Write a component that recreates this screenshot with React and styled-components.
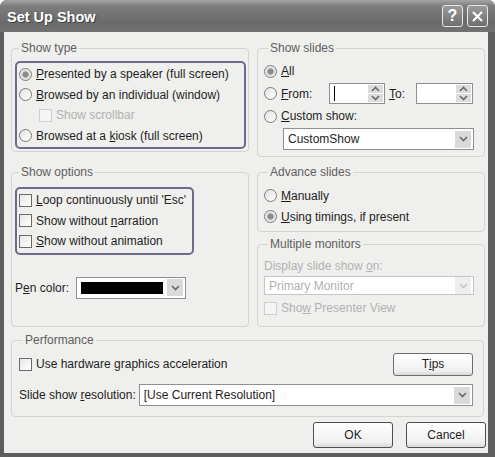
import React from 'react'
import styled, { createGlobalStyle } from 'styled-components'

const GlobalStyle = createGlobalStyle`
  html, body { margin: 0; padding: 0; background: #ffffff; }
  body { font-family: "Liberation Sans", Arial, sans-serif; }
`;

const Window = styled.div`
  width: 495px;
  height: 457px;
  background: #5e5e5e;
  border-radius: 7px 7px 0 0;
  display: flex;
  flex-direction: column;
  overflow: hidden;
`;

const TitleBar = styled.div`
  height: 32px;
  flex: none;
  display: flex;
  align-items: center;
  padding: 0 7px 0 7px;
  background: linear-gradient(#a4a4a4 0%, #7c7c7c 20%, #6a6a6a 70%, #727272 100%);
`;

const TitleText = styled.div`
  flex: 1;
  color: #ffffff;
  font-weight: bold;
  font-size: 14.5px;
  text-shadow: 1px 1px 0 #3e3e3e;
  padding-top: 2px;
`;

const CaptionButton = styled.div`
  width: 21px;
  height: 22px;
  box-sizing: border-box;
  margin-left: 4px;
  border: 1px solid #e8e8e8;
  border-radius: 3px;
  background: linear-gradient(#9a9a9a, #6e6e6e);
  display: flex;
  align-items: center;
  justify-content: center;
  color: #ffffff;
  font-weight: bold;
  font-size: 16px;
`;

const Client = styled.div`
  flex: 1;
  margin: 0 7px 4px 4px;
  background: #efefed;
  padding: 9px 4px 0 7px;
  display: flex;
  flex-direction: column;
  color: #1e1e1e;
  font-size: 12px;
`;

const Columns = styled.div`
  display: grid;
  grid-template-columns: 238px 228px;
  column-gap: 8px;
`;

const Column = styled.div`
  display: flex;
  flex-direction: column;
  min-width: 0;
  gap: ${p => p.$gap || 8}px;
`;

const Group = styled.fieldset`
  margin: 0;
  min-width: 0;
  box-sizing: border-box;
  height: ${p => p.$h}px;
  border: 1px solid #d3d3cf;
  border-radius: 4px;
  padding: ${p => p.$pad || '2px 2px 0 3px'};
  display: flex;
  flex-direction: column;
`;

const Legend = styled.legend`
  color: #606060;
  padding: 0 2px;
  margin-left: 4px;
`;

const Highlight = styled.div`
  border: 2px solid #6e6a8c;
  border-radius: 5px;
  padding: ${p => p.$pad || '1px 2px'};
  margin-top: ${p => p.$mt || 0}px;
  width: ${p => p.$w ? p.$w + 'px' : 'auto'};
  box-sizing: border-box;
  white-space: nowrap;
`;

const Row = styled.div`
  display: flex;
  align-items: center;
  height: ${p => p.$h || 20.5}px;
  padding-left: ${p => p.$indent || 0}px;
  color: ${p => p.$disabled ? '#b2b2b2' : 'inherit'};
  gap: ${p => p.$gap ?? 4}px;
  margin-top: ${p => p.$mt || 0}px;
  white-space: nowrap;
`;

const Label = styled.span`
  width: ${p => p.$w ? p.$w + 'px' : 'auto'};
  flex: ${p => p.$grow ? 1 : 'none'};
`;

const Radio = styled.span`
  width: 13px;
  height: 13px;
  box-sizing: border-box;
  flex: none;
  border-radius: 50%;
  border: 1px solid #7a7a7a;
  background: ${p => p.$on
    ? 'radial-gradient(circle, #8a8a8a 0, #8a8a8a 2.5px, #d8d8d8 3.5px, #f4f4f4 6px)'
    : 'linear-gradient(135deg, #e2e2e2, #ffffff)'};
`;

const Check = styled.span`
  width: 13px;
  height: 13px;
  box-sizing: border-box;
  flex: none;
  border: 1px solid ${p => p.$disabled ? '#cfcfcf' : '#6a6a6a'};
  background: ${p => p.$disabled ? '#f5f5f5' : 'linear-gradient(135deg, #e6e6e6, #ffffff)'};
`;

const SelectBox = styled.div`
  height: ${p => p.$h || 22}px;
  width: ${p => p.$w ? p.$w + 'px' : 'auto'};
  flex: ${p => p.$w ? 'none' : 1};
  min-width: 0;
  box-sizing: border-box;
  border: 1px solid ${p => p.$disabled ? '#c6c6c6' : '#8f8f8f'};
  background: #ffffff;
  display: flex;
  align-items: center;
  padding: 0 2px 0 4px;
  color: ${p => p.$disabled ? '#b2b2b2' : 'inherit'};
`;

const SelectText = styled.span`
  flex: 1;
  white-space: nowrap;
`;

const ArrowButton = styled.span`
  width: 16px;
  height: 17px;
  flex: none;
  background: ${p => p.$disabled ? '#eeeeee' : '#dadada'};
  display: flex;
  align-items: center;
  justify-content: center;
`;

const Swatch = styled.span`
  flex: 1;
  height: 12px;
  background: #000000;
  margin-right: 4px;
`;

const SpinBox = styled.div`
  width: ${p => p.$w || 56}px;
  height: 21px;
  flex: none;
  box-sizing: border-box;
  border: 1px solid #8f8f8f;
  background: #ffffff;
  display: flex;
  align-items: center;
  padding: 0 1px 0 4px;
`;

const Caret = styled.span`
  width: 1px;
  height: 15px;
  background: #000000;
`;

const SpinArrows = styled.span`
  margin-left: auto;
  width: 15px;
  height: 17px;
  display: flex;
  flex-direction: column;
  gap: 1px;
  background: #ffffff;
`;

const SpinPart = styled.span`
  flex: 1;
  background: #dcdcdc;
  display: flex;
  align-items: center;
  justify-content: center;
`;

const Button = styled.div`
  width: ${p => p.$w || 80}px;
  height: ${p => p.$h || 26}px;
  flex: none;
  box-sizing: border-box;
  border: 1px solid ${p => p.$soft ? '#6e6e6e' : '#4e4e4e'};
  border-radius: 3px;
  background: linear-gradient(#ffffff, #f0f0f0 80%, #d8d8d8);
  display: flex;
  align-items: center;
  justify-content: center;
`;

const Footer = styled.div`
  display: flex;
  justify-content: flex-end;
  gap: 13px;
  margin-top: 5px;
  margin-right: -2px;
`;

const Chevron = ({ up, light }) => (
  <svg width="9" height="6" viewBox="0 0 9 6">
    <path d={up ? 'M1 5 L4.5 1.5 L8 5' : 'M1 1 L4.5 4.5 L8 1'} fill="none"
      stroke={light ? '#c4c4c4' : '#6a6a6a'} strokeWidth="1.6" />
  </svg>
);

const Spin = ({ caret, w }) => (
  <SpinBox $w={w}>
    {caret && <Caret />}
    <SpinArrows>
      <SpinPart><Chevron up /></SpinPart>
      <SpinPart><Chevron /></SpinPart>
    </SpinArrows>
  </SpinBox>
);

export default function App() {
  return (
    <>
      <GlobalStyle />
      <Window>
        <TitleBar>
          <TitleText>Set Up Show</TitleText>
          <CaptionButton>?</CaptionButton>
          <CaptionButton>
            <svg width="11" height="11" viewBox="0 0 11 11">
              <path d="M1 1 L10 10 M10 1 L1 10" stroke="#ffffff" strokeWidth="2.2" />
            </svg>
          </CaptionButton>
        </TitleBar>
        <Client>
          <Columns>
            <Column $gap={13}>
              <Group $h={111}>
                <Legend>Show type</Legend>
                <Highlight $mt={4}>
                  <Row><Radio $on /><span><u>P</u>resented by a speaker (full screen)</span></Row>
                  <Row><Radio /><span><u>B</u>rowsed by an individual (window)</span></Row>
                  <Row $indent={20} $disabled><Check $disabled /><span>Show scrollbar</span></Row>
                  <Row><Radio /><span>Browsed at a <u>k</u>iosk (full screen)</span></Row>
                </Highlight>
              </Group>
              <Group $h={162}>
                <Legend>Show options</Legend>
                <Highlight $mt={6} $w={179}>
                  <Row><Check /><span><u>L</u>oop continuously until 'Esc'</span></Row>
                  <Row><Check /><span>Show without <u>n</u>arration</span></Row>
                  <Row><Check /><span><u>S</u>how without animation</span></Row>
                </Highlight>
                <Row $h={22} $mt={22} $gap={7}>
                  <span>P<u>e</u>n color:</span>
                  <SelectBox $w={110} $h={22}>
                    <Swatch />
                    <ArrowButton><Chevron /></ArrowButton>
                  </SelectBox>
                </Row>
              </Group>
            </Column>
            <Column $gap={8}>
              <Group $h={116} $pad="2px 10px 0 6px">
                <Legend>Show slides</Legend>
                <Row $h={22} $mt={3}><Radio $on /><span><u>A</u>ll</span></Row>
                <Row $h={23}>
                  <Radio /><Label $w={44}><u>F</u>rom:</Label>
                  <Spin caret w={56} />
                  <Label $w={23}><u>T</u>o:</Label>
                  <Spin w={57} />
                </Row>
                <Row $h={22}><Radio /><span><u>C</u>ustom show:</span></Row>
                <Row $h={24} $indent={19}>
                  <SelectBox>
                    <SelectText>CustomShow</SelectText>
                    <ArrowButton><Chevron /></ArrowButton>
                  </SelectBox>
                </Row>
              </Group>
              <Group $h={67} $pad="2px 2px 0 6px">
                <Legend>Advance slides</Legend>
                <Row $h={21} $mt={4}><Radio /><span><u>M</u>anually</span></Row>
                <Row $h={21}><Radio $on /><span><u>U</u>sing timings, if present</span></Row>
              </Group>
              <Group $h={90} $pad="2px 10px 0 6px" style={{ marginTop: -3 }}>
                <Legend>Multiple monitors</Legend>
                <Row $h={20} $mt={3} $disabled><span>Display slide show <u>o</u>n:</span></Row>
                <SelectBox $disabled>
                  <SelectText>Primary Monitor</SelectText>
                  <ArrowButton $disabled><Chevron light /></ArrowButton>
                </SelectBox>
                <Row $h={26} $disabled><Check $disabled /><span>Sho<u>w</u> Presenter View</span></Row>
              </Group>
            </Column>
          </Columns>
          <Group $h={84} $pad="0 10px 0 7px" style={{ marginTop: 6 }}>
            <Legend>Performance</Legend>
            <Row $h={26} $mt={4}>
              <Check /><Label $grow>Use hardware <u>g</u>raphics acceleration</Label>
              <Button $w={80} $h={23} $soft>T<u>i</u>ps</Button>
            </Row>
            <Row $h={24} $mt={6} $gap={3}>
              <span>Slide show <u>r</u>esolution:</span>
              <SelectBox>
                <SelectText>[Use Current Resolution]</SelectText>
                <ArrowButton><Chevron /></ArrowButton>
              </SelectBox>
            </Row>
          </Group>
          <Footer>
            <Button>OK</Button>
            <Button>Cancel</Button>
          </Footer>
        </Client>
      </Window>
    </>
  )
}
